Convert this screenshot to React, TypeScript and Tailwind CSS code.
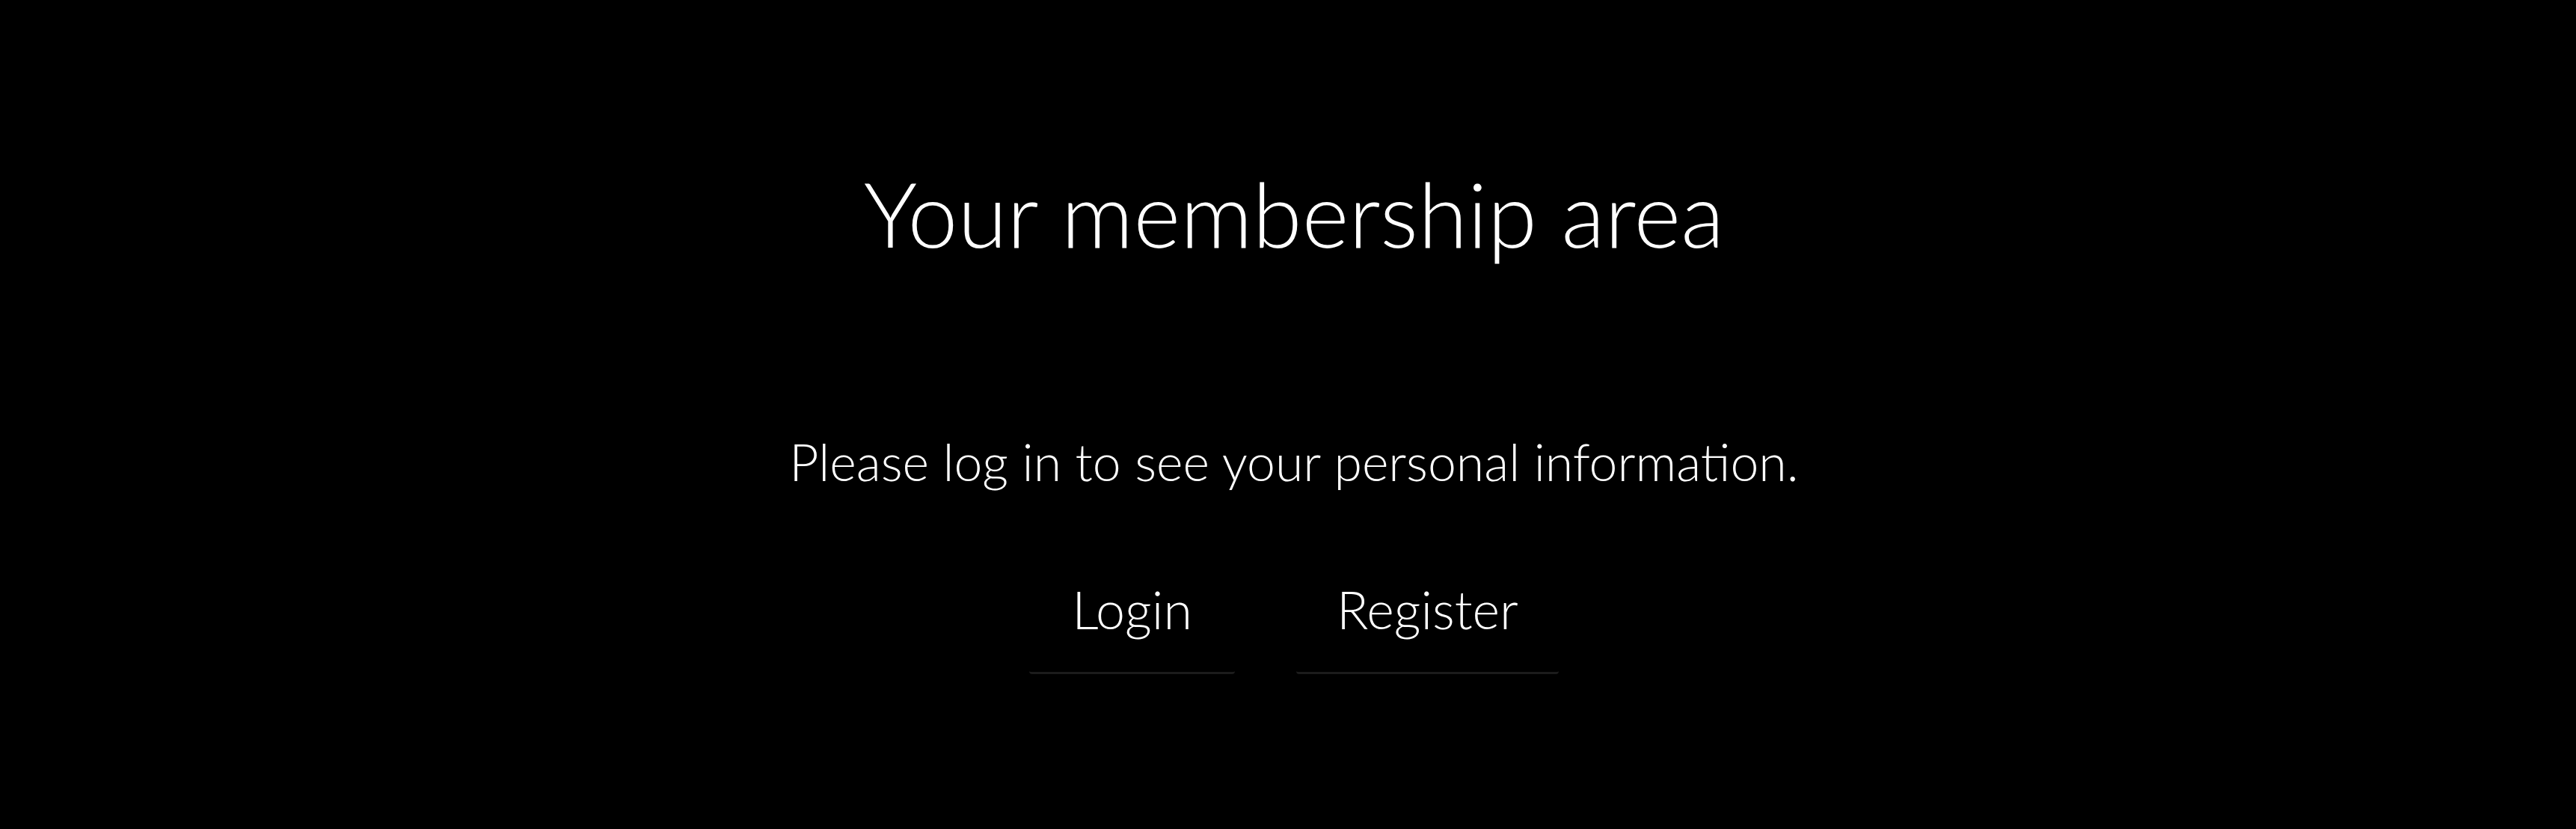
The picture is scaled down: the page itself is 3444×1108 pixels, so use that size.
export default function App() {
  return (
    <div className="w-full h-[1108px] bg-black text-white flex flex-col items-center pl-[16px] font-['Lato','Noto_Sans',sans-serif]">
      <h1 className="mt-[225px] text-[120px] leading-none font-light">Your membership area</h1>
      <p className="mt-[238px] text-[68px] leading-none font-light">Please log in to see your personal information.</p>
      <div className="mt-[128px] flex gap-[82px]">
        <button className="px-[57px] pb-[49px] text-[70px] leading-none font-light border-b-[3px] border-[#1c1c1c] rounded-b-sm">Login</button>
        <button className="px-[54px] pb-[49px] text-[70px] leading-none font-light border-b-[3px] border-[#1c1c1c] rounded-b-sm">Register</button>
      </div>
    </div>
  );
}
